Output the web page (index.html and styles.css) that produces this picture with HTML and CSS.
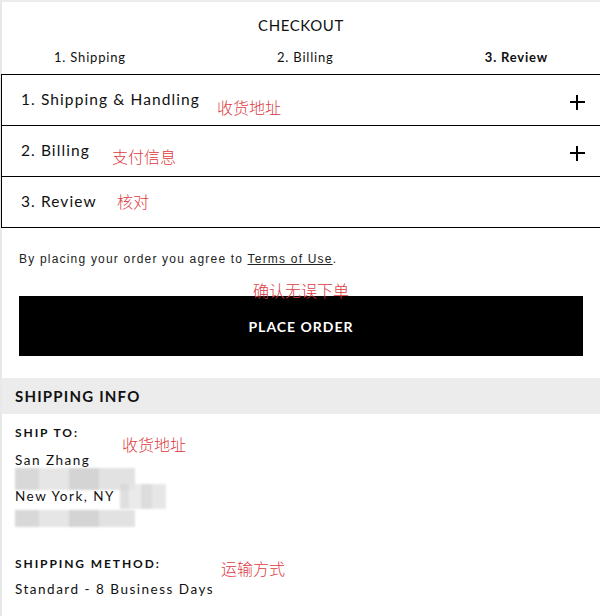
FILE: index.html
```html
<!DOCTYPE html>
<html lang="zh-CN">

<head>
    <meta charset="UTF-8">
    <meta name="viewport" content="width=device-width, initial-scale=1.0">
    <title>Checkout</title>
    <link rel="stylesheet" href="styles.css">
</head>

<body>

    <div class="page">
        <!-- Header and steps -->
        <header class="checkout-head">
            <h1>CHECKOUT</h1>
            <nav class="steps">
                <span>1. Shipping</span>
                <span>2. Billing</span>
                <span class="current">3. Review</span>
            </nav>
        </header>

        <!-- Accordion sections -->
        <div class="accordion">
            <div class="acc-row">
                <span class="acc-title">1. Shipping &amp; Handling</span>
                <span class="plus"></span>
            </div>
            <div class="acc-row">
                <span class="acc-title">2. Billing</span>
                <span class="plus"></span>
            </div>
            <div class="acc-row">
                <span class="acc-title">3. Review</span>
            </div>
        </div>

        <p class="terms">By placing your order you agree to <a href="#">Terms of Use</a>.</p>

        <button class="place-order" type="button">PLACE ORDER</button>

        <!-- Shipping summary -->
        <section class="ship-info">
            <h2>SHIPPING INFO</h2>
            <div class="ship-body">
                <h3>SHIP TO:</h3>
                <p class="line">San Zhang</p>
                <p class="line gap">&nbsp;</p>
                <p class="line">New York, NY</p>
                <p class="line">&nbsp;</p>

                <h3 class="method">SHIPPING METHOD:</h3>
                <p class="line">Standard - 8 Business Days</p>
            </div>
        </section>

        <!-- pixelated address details -->
        <div class="mosaic m1"></div>
        <div class="mosaic m2"></div>
        <div class="mosaic m3"></div>

        <!-- notes -->
        <span class="note n1">收货地址</span>
        <span class="note n2">支付信息</span>
        <span class="note n3">核对</span>
        <span class="note n4">确认无误下单</span>
        <span class="note n5">收货地址</span>
        <span class="note n6">运输方式</span>
    </div>

</body>

</html>
```

FILE: styles.css
```css
* {
    margin: 0;
    padding: 0;
    box-sizing: border-box;
}

body {
    font-family: 'Lato', 'Liberation Sans', sans-serif;
    background-color: #fff;
    color: #111;
    overflow: hidden;
}

.page {
    position: relative;
    width: 600px;
    height: 616px;
    border-left: 2px solid #e8e8e8;
    border-top: 2px solid #ececec;
}

/* Header */
.checkout-head {
    text-align: center;
}

h1 {
    font-size: 15px;
    font-weight: 400;
    letter-spacing: 0.6px;
    padding-top: 14px;
    line-height: 18px;
}

.steps {
    display: flex;
    justify-content: space-between;
    padding: 0 52px 0 52px;
    margin-top: 14px;
    font-size: 13px;
    letter-spacing: 0.8px;
    line-height: 18px;
    height: 26px;
}

.steps .current {
    font-weight: 700;
}

/* Accordion */
.accordion {
    margin-left: -1px;
    border-left: 1px solid #000;
    border-top: 1px solid #000;
}

.acc-row {
    display: flex;
    align-items: center;
    justify-content: space-between;
    height: 51px;
    padding: 0 15px 2px 19px;
    border-bottom: 1px solid #000;
}

.acc-title {
    font-size: 15.5px;
    letter-spacing: 1.1px;
}

.plus {
    position: relative;
    width: 15px;
    height: 15px;
    margin-top: 6px;
}

.plus::before,
.plus::after {
    content: "";
    position: absolute;
    background: #000;
}

.plus::before {
    left: 0;
    top: 6px;
    width: 15px;
    height: 2px;
}

.plus::after {
    left: 6px;
    top: 0;
    width: 2px;
    height: 15px;
}

/* Terms and button */
.terms {
    font-family: 'Liberation Sans', sans-serif;
    font-size: 12px;
    letter-spacing: 1.2px;
    color: #222;
    padding: 23px 0 0 17px;
    line-height: 16px;
}

.terms a {
    color: #222;
}

.place-order {
    display: block;
    width: 564px;
    height: 60px;
    margin: 29px 0 0 17px;
    background: #000;
    border: none;
    color: #fff;
    font-family: 'Lato', sans-serif;
    font-size: 14px;
    font-weight: 700;
    letter-spacing: 1px;
}

/* Shipping info */
.ship-info {
    margin-top: 22px;
}

.ship-info h2 {
    background: #ececec;
    font-size: 15px;
    font-weight: 700;
    letter-spacing: 1.2px;
    line-height: 36px;
    padding-left: 13px;
}

.ship-body {
    padding: 11px 0 0 13px;
}

h3 {
    font-size: 12px;
    font-weight: 700;
    letter-spacing: 1.9px;
    line-height: 16px;
    margin-bottom: 10px;
}

.line {
    font-size: 13.5px;
    letter-spacing: 1.5px;
    line-height: 18px;
}

h3.method {
    margin-top: 33px;
    margin-bottom: 8px;
}

/* Blurred blocks over the street and zip lines */
.mosaic {
    position: absolute;
    background: linear-gradient(90deg, #d8d8d8 0 20%, #e6e6e6 20% 45%, #d4d4d4 45% 70%, #e2e2e2 70% 100%);
    filter: blur(1px);
}

.m1 {
    left: 13px;
    top: 466px;
    width: 120px;
    height: 22px;
}

.m2 {
    left: 118px;
    top: 482px;
    width: 46px;
    height: 25px;
    opacity: 0.8;
}

.m3 {
    left: 13px;
    top: 508px;
    width: 120px;
    height: 17px;
}

/* Red notes */
.note {
    position: absolute;
    font-family: 'Noto Sans CJK SC', sans-serif;
    font-size: 16px;
    font-weight: 300;
    line-height: 18px;
    color: #dc3a3f;
}

.n1 { left: 215px; top: 96px; }
.n2 { left: 110px; top: 145px; }
.n3 { left: 115px; top: 190px; }
.n4 { left: 251px; top: 279px; }
.n5 { left: 120px; top: 433px; }
.n6 { left: 219px; top: 557px; }
```
